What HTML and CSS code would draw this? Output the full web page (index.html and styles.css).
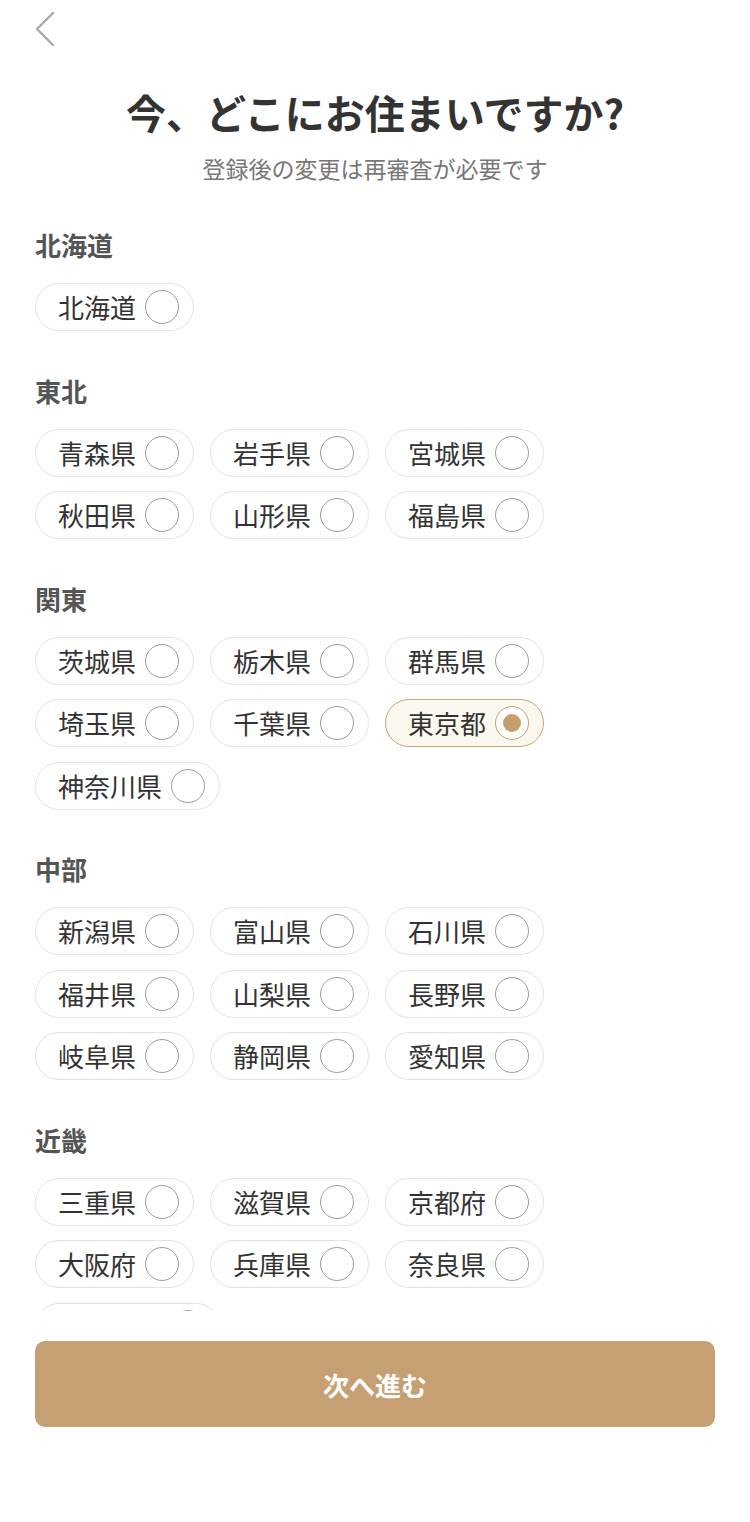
FILE: index.html
```html
<!DOCTYPE html>
<html lang="ja">
<head>
    <meta charset="UTF-8">
    <meta name="viewport" content="width=device-width, initial-scale=1.0">
    <title>お住まいの地域</title>
    <link rel="stylesheet" href="styles.css">
</head>
<body>
    <div class="page">
        <div class="scroll">
            <div class="topbar">
                <button class="back" aria-label="戻る">
                    <svg width="20" height="36" viewBox="0 0 20 36">
                        <polyline points="18,2 2,18 18,34" fill="none" stroke="#a8a8a8" stroke-width="2.4" stroke-linecap="round" stroke-linejoin="round"/>
                    </svg>
                </button>
            </div>
            <h1 class="title">今、どこにお住まいですか?</h1>
            <p class="subtitle">登録後の変更は再審査が必要です</p>

            <section class="region">
                <h2>北海道</h2>
                <div class="chips">
                    <label class="chip">北海道<span class="radio"></span></label>
                </div>
            </section>

            <section class="region">
                <h2>東北</h2>
                <div class="chips">
                    <label class="chip">青森県<span class="radio"></span></label>
                    <label class="chip">岩手県<span class="radio"></span></label>
                    <label class="chip">宮城県<span class="radio"></span></label>
                    <label class="chip">秋田県<span class="radio"></span></label>
                    <label class="chip">山形県<span class="radio"></span></label>
                    <label class="chip">福島県<span class="radio"></span></label>
                </div>
            </section>

            <section class="region">
                <h2>関東</h2>
                <div class="chips">
                    <label class="chip">茨城県<span class="radio"></span></label>
                    <label class="chip">栃木県<span class="radio"></span></label>
                    <label class="chip">群馬県<span class="radio"></span></label>
                    <label class="chip">埼玉県<span class="radio"></span></label>
                    <label class="chip">千葉県<span class="radio"></span></label>
                    <label class="chip selected">東京都<span class="radio"></span></label>
                    <label class="chip">神奈川県<span class="radio"></span></label>
                </div>
            </section>

            <section class="region">
                <h2>中部</h2>
                <div class="chips">
                    <label class="chip">新潟県<span class="radio"></span></label>
                    <label class="chip">富山県<span class="radio"></span></label>
                    <label class="chip">石川県<span class="radio"></span></label>
                    <label class="chip">福井県<span class="radio"></span></label>
                    <label class="chip">山梨県<span class="radio"></span></label>
                    <label class="chip">長野県<span class="radio"></span></label>
                    <label class="chip">岐阜県<span class="radio"></span></label>
                    <label class="chip">静岡県<span class="radio"></span></label>
                    <label class="chip">愛知県<span class="radio"></span></label>
                </div>
            </section>

            <section class="region">
                <h2>近畿</h2>
                <div class="chips">
                    <label class="chip">三重県<span class="radio"></span></label>
                    <label class="chip">滋賀県<span class="radio"></span></label>
                    <label class="chip">京都府<span class="radio"></span></label>
                    <label class="chip">大阪府<span class="radio"></span></label>
                    <label class="chip">兵庫県<span class="radio"></span></label>
                    <label class="chip">奈良県<span class="radio"></span></label>
                    <label class="chip">和歌山県<span class="radio"></span></label>
                </div>
            </section>
        </div>

        <div class="footer">
            <button class="next">次へ進む</button>
        </div>
    </div>
</body>
</html>
```

FILE: styles.css
```css
body {
    margin: 0;
    background-color: #fff;
    font-family: "Noto Sans CJK JP", "Noto Sans", sans-serif;
    color: #333;
}

.page {
    height: 1522px;
    display: flex;
    flex-direction: column;
}

.scroll {
    height: 1311px;
    overflow: hidden;
    flex-shrink: 0;
}

.topbar {
    box-sizing: border-box;
    height: 60px;
    padding: 11px 0 0 35px;
}

.back {
    padding: 0;
    border: none;
    background: none;
    display: block;
}

.title {
    margin: 27px 0 0;
    font-size: 40px;
    line-height: 50px;
    font-weight: 700;
    text-align: center;
    color: #333;
}

.subtitle {
    margin: 15px 0 0;
    font-size: 23px;
    line-height: 32px;
    text-align: center;
    color: #777;
}

.region {
    padding: 0 35px;
    margin-bottom: 41.5px;
}

.subtitle + .region {
    margin-top: 43px;
}

.region h2 {
    margin: 0 0 20px;
    font-size: 26px;
    line-height: 36px;
    font-weight: 700;
    color: #555;
}

.chips {
    display: flex;
    flex-wrap: wrap;
    gap: 14.5px 16px;
}

.chip {
    box-sizing: border-box;
    height: 48px;
    display: flex;
    align-items: center;
    gap: 9px;
    padding: 0 14px 0 22px;
    border: 1.5px solid #e3e3e3;
    border-radius: 24px;
    background-color: #fff;
    font-size: 26px;
    line-height: 1;
    color: #333;
}

.radio {
    box-sizing: border-box;
    width: 34px;
    height: 34px;
    border: 1.5px solid #9c9c9c;
    border-radius: 50%;
    background-color: #fff;
    display: flex;
    align-items: center;
    justify-content: center;
}

.chip.selected {
    background-color: #fbf8ef;
    border-color: #c9a677;
}

.chip.selected .radio {
    border-color: #c6a272;
}

.chip.selected .radio::after {
    content: "";
    width: 18px;
    height: 18px;
    border-radius: 50%;
    background-color: #c49e6e;
}

.footer {
    padding: 30px 35px 0;
}

.next {
    width: 100%;
    height: 86px;
    border: none;
    border-radius: 10px;
    background-color: #c6a073;
    color: #fff;
    font-family: "Noto Sans CJK JP", "Noto Sans", sans-serif;
    font-size: 26px;
    font-weight: 700;
    cursor: pointer;
}
```
